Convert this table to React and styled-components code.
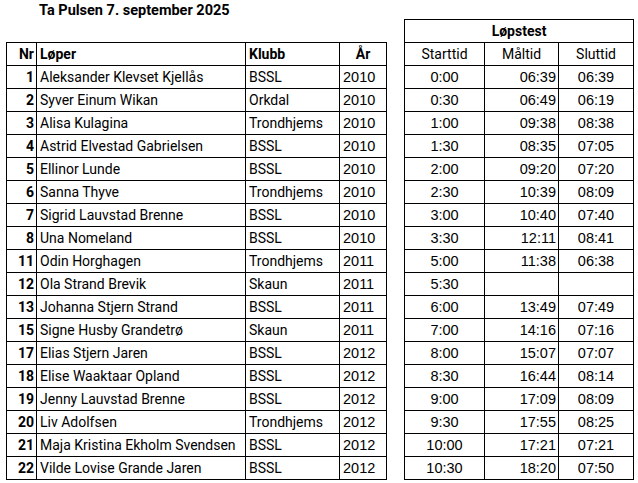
import styled, { createGlobalStyle } from "styled-components";

const rows = [
  [1, "Aleksander Klevset Kjellås", "BSSL", 2010, "0:00", "06:39", "06:39"],
  [2, "Syver Einum Wikan", "Orkdal", 2010, "0:30", "06:49", "06:19"],
  [3, "Alisa Kulagina", "Trondhjems", 2010, "1:00", "09:38", "08:38"],
  [4, "Astrid Elvestad Gabrielsen", "BSSL", 2010, "1:30", "08:35", "07:05"],
  [5, "Ellinor Lunde", "BSSL", 2010, "2:00", "09:20", "07:20"],
  [6, "Sanna Thyve", "Trondhjems", 2010, "2:30", "10:39", "08:09"],
  [7, "Sigrid Lauvstad Brenne", "BSSL", 2010, "3:00", "10:40", "07:40"],
  [8, "Una Nomeland", "BSSL", 2010, "3:30", "12:11", "08:41"],
  [11, "Odin Horghagen", "Trondhjems", 2011, "5:00", "11:38", "06:38"],
  [12, "Ola Strand Brevik", "Skaun", 2011, "5:30", "", ""],
  [13, "Johanna Stjern Strand", "BSSL", 2011, "6:00", "13:49", "07:49"],
  [15, "Signe Husby Grandetrø", "Skaun", 2011, "7:00", "14:16", "07:16"],
  [17, "Elias Stjern Jaren", "BSSL", 2012, "8:00", "15:07", "07:07"],
  [18, "Elise Waaktaar Opland", "BSSL", 2012, "8:30", "16:44", "08:14"],
  [19, "Jenny Lauvstad Brenne", "BSSL", 2012, "9:00", "17:09", "08:09"],
  [20, "Liv Adolfsen", "Trondhjems", 2012, "9:30", "17:55", "08:25"],
  [21, "Maja Kristina Ekholm Svendsen", "BSSL", 2012, "10:00", "17:21", "07:21"],
  [22, "Vilde Lovise Grande Jaren", "BSSL", 2012, "10:30", "18:20", "07:50"],
];

const GlobalStyle = createGlobalStyle`
  body {
    margin: 0;
    background: #fff;
    color: #000;
    font-family: Roboto, "Liberation Sans", sans-serif;
  }
`;

const Page = styled.div`
  width: 638px;
  height: 483px;
  padding: 1px 0 0 6px;
  box-sizing: border-box;
`;

const Title = styled.div`
  height: 18px;
  padding-left: 33px;
  font-size: 14.5px;
  font-weight: 700;
  line-height: 20px;
`;

const Tables = styled.div`
  display: flex;
  align-items: flex-end;
  gap: 17px;
`;

const Sheet = styled.table`
  border-collapse: collapse;
  table-layout: fixed;
  width: ${(p) => p.$width}px;
`;

const Cell = styled.td`
  border: 1px solid #000;
  height: 22px;
  padding: 0 3px;
  box-sizing: border-box;
  font-size: ${(p) => (p.$num ? 14.5 : 14)}px;
  line-height: 22px;
  white-space: nowrap;
  overflow: hidden;
  text-align: ${(p) => p.$align || "left"};
  font-weight: ${(p) => (p.$bold ? 700 : 400)};
  font-family: ${(p) =>
    p.$num ? '"Liberation Sans", Arial, sans-serif' : 'Roboto, "Liberation Sans", sans-serif'};
  padding-right: ${(p) => (p.$pr != null ? p.$pr : 3)}px;
`;

const Head = styled(Cell).attrs({ as: "th" })`
  font-weight: ${(p) => (p.$light ? 400 : 700)};
`;

export default function App() {
  return (
    <Page>
      <GlobalStyle />
      <Title>Ta Pulsen 7. september 2025</Title>
      <Tables>
        <Sheet $width={380}>
          <colgroup>
            <col style={{ width: 30 }} />
            <col style={{ width: 209 }} />
            <col style={{ width: 94 }} />
            <col style={{ width: 47 }} />
          </colgroup>
          <thead>
            <tr>
              <Head $align="right" $pr={2}>Nr</Head>
              <Head>Løper</Head>
              <Head>Klubb</Head>
              <Head $align="center">År</Head>
            </tr>
          </thead>
          <tbody>
            {rows.map((r) => (
              <tr key={r[0]}>
                <Cell $align="right" $bold $pr={2}>{r[0]}</Cell>
                <Cell>{r[1]}</Cell>
                <Cell>{r[2]}</Cell>
                <Cell $num>{r[3]}</Cell>
              </tr>
            ))}
          </tbody>
        </Sheet>
        <Sheet $width={229}>
          <colgroup>
            <col style={{ width: 80 }} />
            <col style={{ width: 74 }} />
            <col style={{ width: 75 }} />
          </colgroup>
          <thead>
            <tr>
              <Head colSpan={3} $align="center">Løpstest</Head>
            </tr>
            <tr>
              <Head $light $align="center">Starttid</Head>
              <Head $light $align="center">Måltid</Head>
              <Head $light $align="center">Sluttid</Head>
            </tr>
          </thead>
          <tbody>
            {rows.map((r) => (
              <tr key={r[0]}>
                <Cell $num $align="center">{r[4]}</Cell>
                <Cell $num $align="right" $pr={2}>{r[5]}</Cell>
                <Cell $num $align="center">{r[6]}</Cell>
              </tr>
            ))}
          </tbody>
        </Sheet>
      </Tables>
    </Page>
  );
}
